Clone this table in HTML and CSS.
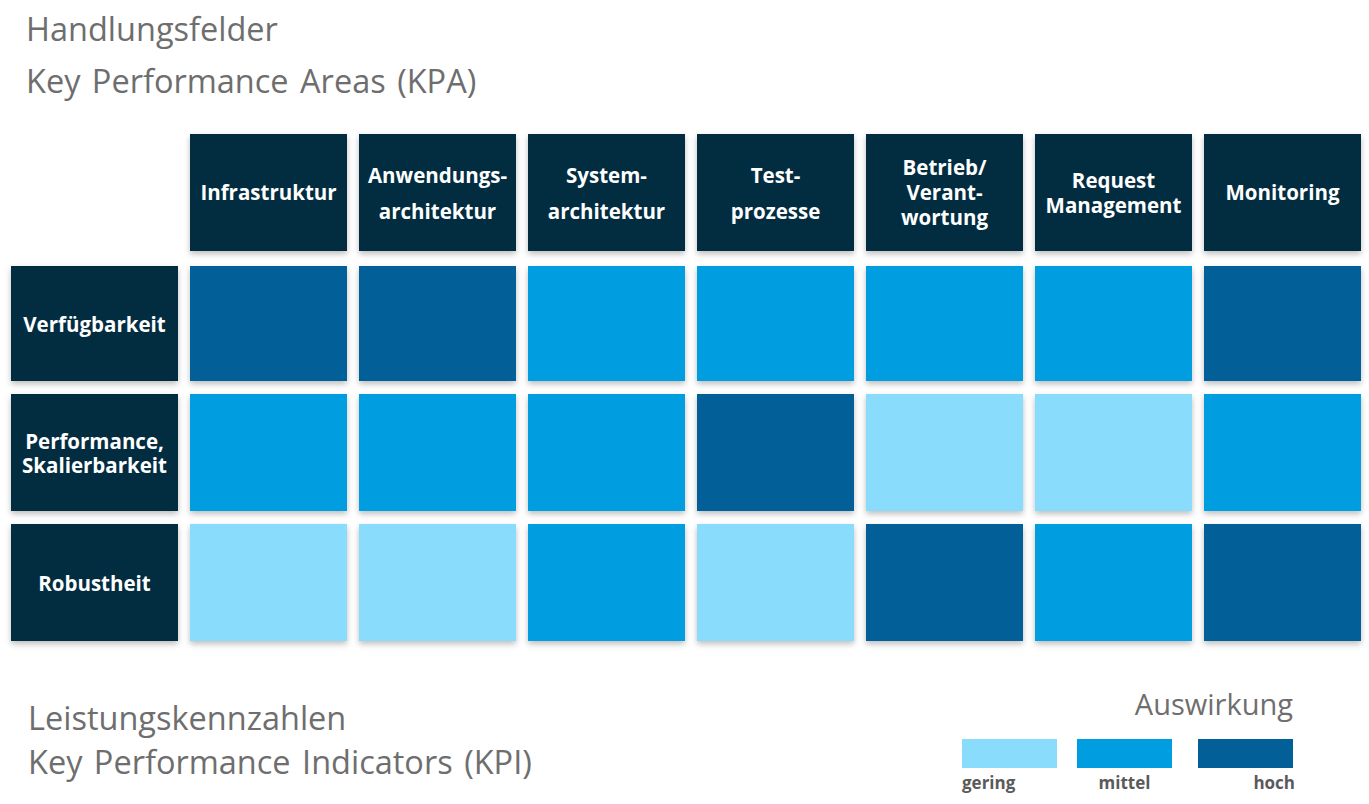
FILE: index.html
```html
<!DOCTYPE html>
<html lang="de">
<head>
<meta charset="utf-8">
<title>Handlungsfelder</title>
<link rel="stylesheet" href="styles.css">
</head>
<body>
<div class="page">
  <header class="titles">
    <div class="title">Handlungsfelder</div>
    <div class="title">Key Performance Areas (KPA)</div>
  </header>

  <div class="matrix">
    <div class="corner"></div>
    <div class="cell head">Infrastruktur</div>
    <div class="cell head wide">Anwendungs-<br>architektur</div>
    <div class="cell head wide">System-<br>architektur</div>
    <div class="cell head wide">Test-<br>prozesse</div>
    <div class="cell head">Betrieb/<br>Verant-<br>wortung</div>
    <div class="cell head">Request<br>Management</div>
    <div class="cell head">Monitoring</div>

    <div class="cell rowhead first">Verfügbarkeit</div>
    <div class="cell hoch first"></div>
    <div class="cell hoch first"></div>
    <div class="cell mittel first"></div>
    <div class="cell mittel first"></div>
    <div class="cell mittel first"></div>
    <div class="cell mittel first"></div>
    <div class="cell hoch first"></div>

    <div class="cell rowhead">Performance,<br>Skalierbarkeit</div>
    <div class="cell mittel"></div>
    <div class="cell mittel"></div>
    <div class="cell mittel"></div>
    <div class="cell hoch"></div>
    <div class="cell gering"></div>
    <div class="cell gering"></div>
    <div class="cell mittel"></div>

    <div class="cell rowhead">Robustheit</div>
    <div class="cell gering"></div>
    <div class="cell gering"></div>
    <div class="cell mittel"></div>
    <div class="cell gering"></div>
    <div class="cell hoch"></div>
    <div class="cell mittel"></div>
    <div class="cell hoch"></div>
  </div>

  <footer class="footer">
    <div class="kpi">
      <div class="title">Leistungskennzahlen</div>
      <div class="title">Key Performance Indicators (KPI)</div>
    </div>
    <div class="legend">
      <div class="legend-title">Auswirkung</div>
      <div class="legend-items">
        <div class="legend-item left"><span class="swatch gering"></span><span class="label">gering</span></div>
        <div class="legend-item center"><span class="swatch mittel"></span><span class="label">mittel</span></div>
        <div class="legend-item right"><span class="swatch hoch"></span><span class="label">hoch</span></div>
      </div>
    </div>
  </footer>
</div>
</body>
</html>
```

FILE: styles.css
```css
html, body {
  margin: 0;
  padding: 0;
  background: #ffffff;
}

body {
  font-family: "Open Sans", "DejaVu Sans", sans-serif;
  width: 1369px;
  height: 804px;
  overflow: hidden;
}

.page {
  padding: 3px 0 0 0;
}

.titles {
  padding-left: 26px;
}

.title {
  font-size: 32.5px;
  font-weight: 400;
  color: #6e6e6e;
  line-height: 52px;
  word-spacing: 3px;
}

.matrix {
  display: grid;
  grid-template-columns: 167px repeat(7, 157px);
  grid-template-rows: 117px 117px 117px 117px;
  column-gap: 12px;
  row-gap: 13px;
  margin: 27px 0 0 11px;
}

.cell {
  display: flex;
  align-items: center;
  justify-content: center;
  text-align: center;
  color: #ffffff;
  font-weight: 700;
  font-size: 20.5px;
  line-height: 25px;
  box-shadow: 0 3px 6px rgba(0, 0, 0, 0.26);
}

.cell.first {
  margin-top: 2px;
}

.head {
  background: #022d41;
}

.head.wide {
  line-height: 36px;
}

.rowhead {
  background: #022d41;
  line-height: 24px;
}

.hoch { background: #025f97; }
.mittel { background: #009ee0; }
.gering { background: #8adcfd; }

.footer {
  display: flex;
  justify-content: space-between;
  align-items: flex-start;
  margin-top: 42px;
  padding: 0 74px 0 28px;
}

.kpi {
  padding-top: 13px;
}

.kpi .title {
  line-height: 44px;
}

.legend {
  width: 333px;
  display: flex;
  flex-direction: column;
  align-items: flex-end;
}

.legend-title {
  font-size: 29px;
  color: #6e6e6e;
  line-height: 38px;
  margin-top: 2px;
  margin-right: 2px;
}

.legend-items {
  display: flex;
  width: 333px;
  margin-top: 16px;
}

.legend-item {
  display: flex;
  flex-direction: column;
  width: 95px;
}

.legend-item.left { align-items: flex-start; }
.legend-item.center { align-items: center; margin-left: 20px; }
.legend-item.right { align-items: flex-end; margin-left: 26px; width: 97px; }

.swatch {
  display: block;
  width: 95px;
  height: 29px;
}

.legend-item.right .swatch {
  align-self: flex-start;
}

.label {
  font-size: 17px;
  font-weight: 700;
  color: #5a5a5a;
  line-height: 22px;
  margin-top: 4px;
}
```
